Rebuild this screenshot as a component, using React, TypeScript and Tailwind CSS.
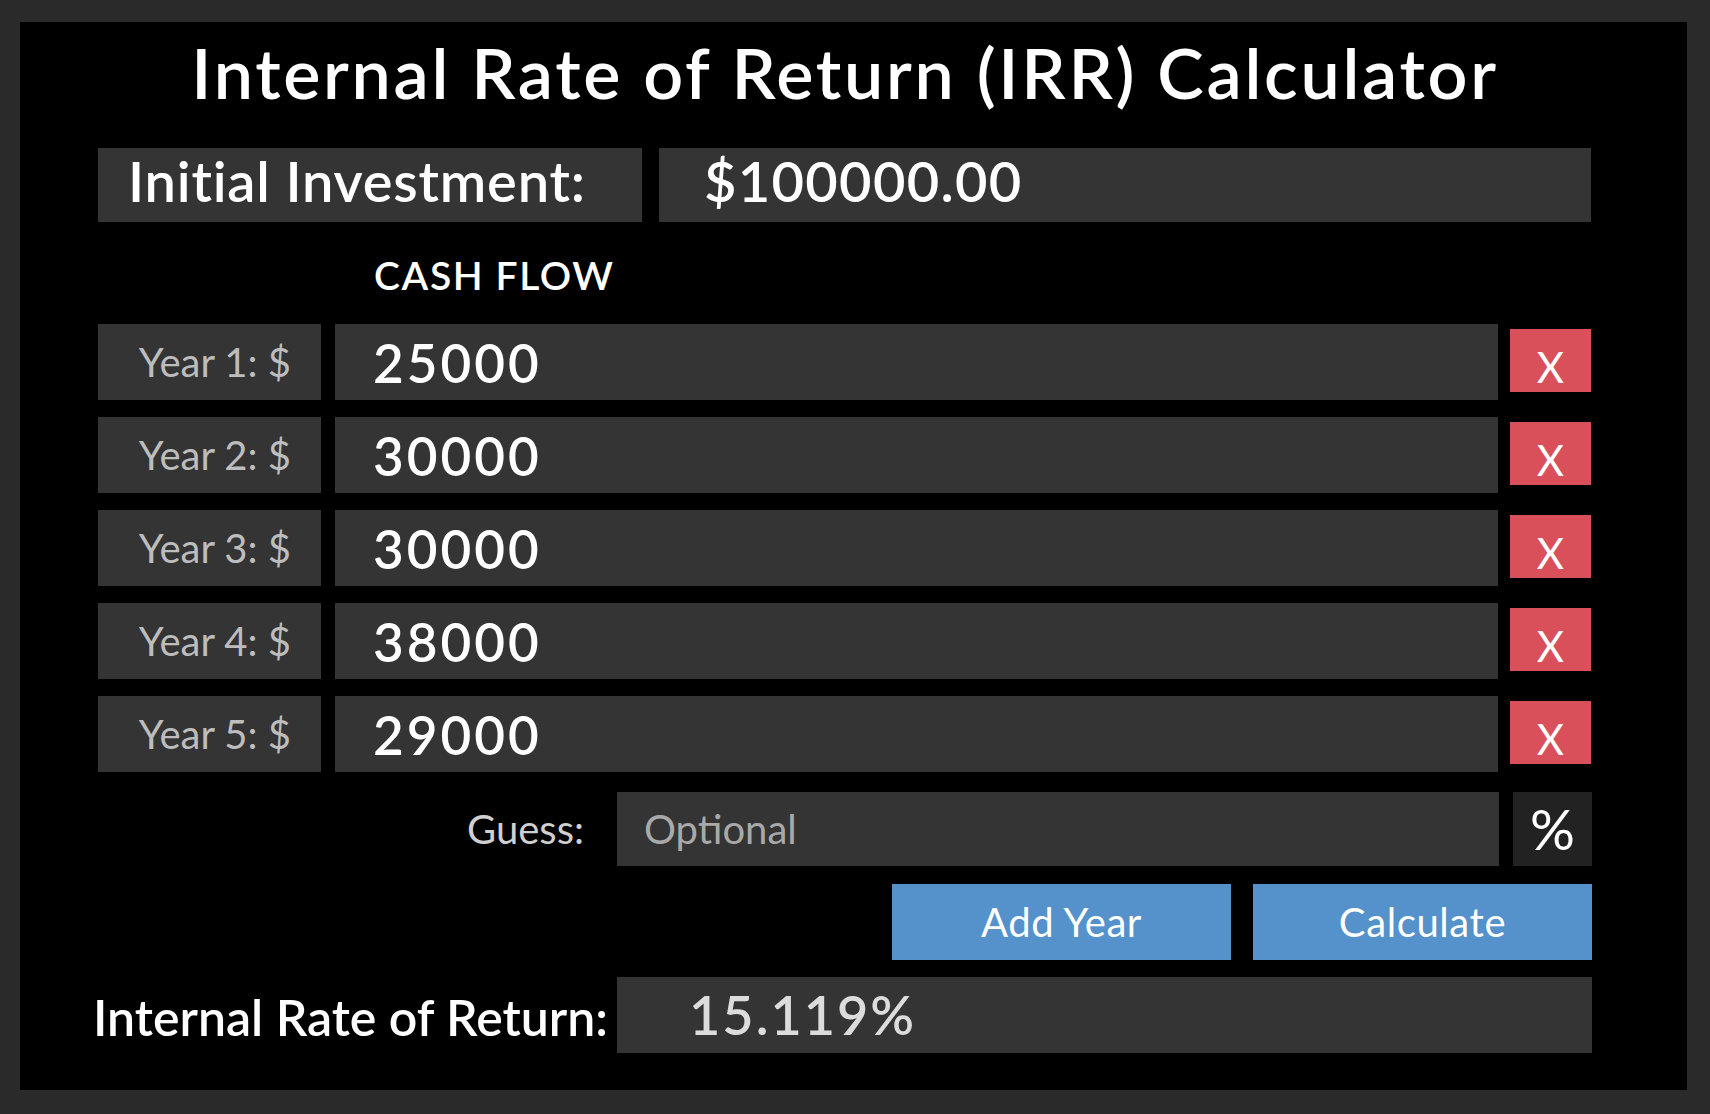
import React from "react";

const years = [
  { label: "Year 1: $", value: "25000" },
  { label: "Year 2: $", value: "30000" },
  { label: "Year 3: $", value: "30000" },
  { label: "Year 4: $", value: "38000" },
  { label: "Year 5: $", value: "29000" },
];

export default function App() {
  return (
    <div
      className="w-[1710px] h-[1114px] bg-[#2a2a2a] pt-[22px] pl-[20px] overflow-hidden"
      style={{ fontFamily: "Lato, 'Open Sans', sans-serif" }}
    >
      <div className="w-[1667px] h-[1068px] bg-black pl-[78px] pt-[8px] flex flex-col">
        <div className="w-[1494px] flex flex-col">
          <h1 className="text-center text-white text-[70px] leading-[84px] font-semibold tracking-[2.7px] whitespace-nowrap">
            Internal Rate of Return (IRR) Calculator
          </h1>

          <div className="mt-[34px] flex gap-[17px] h-[74px]">
            <div className="w-[544px] bg-[#343434] flex items-center pl-[30px] pb-[8px] text-white text-[56px] font-semibold leading-none tracking-[0.8px] whitespace-nowrap">
              Initial Investment:
            </div>
            <div className="w-[932px] bg-[#343434] flex items-center pl-[45px] pb-[8px] text-white text-[56px] font-semibold leading-none tracking-[1.3px]">
              $100000.00
            </div>
          </div>

          <div className="mt-[30px] ml-[276px] h-[47px] text-white text-[39px] leading-[47px] font-semibold tracking-[1.6px]">
            CASH FLOW
          </div>

          <div className="mt-[25px] flex flex-col gap-[17px]">
            {years.map((y) => (
              <div key={y.label} className="flex h-[76px]">
                <div className="w-[223px] bg-[#343434] flex items-center justify-end pr-[30px] text-[#bdbdbd] text-[40px] leading-none whitespace-nowrap">
                  {y.label}
                </div>
                <div className="ml-[14px] w-[1163px] bg-[#343434] flex items-center pl-[38px] text-white text-[53px] font-semibold leading-none tracking-[3px]">
                  {y.value}
                </div>
                <button className="ml-[12px] mt-[5px] w-[81px] h-[63px] bg-[#d9505a] shadow-[0_3px_2px_rgba(0,0,0,0.5)] flex items-center justify-center pt-[12px] text-white text-[42px] leading-none">
                  X
                </button>
              </div>
            ))}
          </div>

          <div className="mt-[20px] flex h-[74px]">
            <div className="flex-1 flex items-center justify-end pr-[33px] text-[#cfcfcf] text-[40px] leading-none">
              Guess:
            </div>
            <div className="w-[882px] shrink-0 bg-[#343434] flex items-center pl-[27px] text-[#a9a9a9] text-[40px] leading-none">
              Optional
            </div>
            <div className="ml-[14px] w-[79px] shrink-0 bg-[#222222] flex items-center justify-center text-white text-[56px] leading-none">
              %
            </div>
          </div>

          <div className="mt-[18px] flex justify-end gap-[22px] h-[76px]">
            <button className="w-[339px] bg-[#5592cc] text-white text-[40px] leading-none tracking-[0.6px] flex items-center justify-center">
              Add Year
            </button>
            <button className="w-[339px] bg-[#5592cc] text-white text-[40px] leading-none tracking-[0.6px] flex items-center justify-center">
              Calculate
            </button>
          </div>

          <div className="mt-[17px] flex h-[76px]">
            <div className="flex-1 min-w-0 flex items-center justify-end pr-[9px] pt-[4px] text-white text-[50px] font-semibold leading-none whitespace-nowrap">
              Internal Rate of Return:
            </div>
            <div className="w-[975px] shrink-0 bg-[#343434] flex items-center pl-[72px] text-[#dcdcdc] text-[54px] font-semibold leading-none tracking-[2px]">
              15.119%
            </div>
          </div>
        </div>
      </div>
    </div>
  );
}
